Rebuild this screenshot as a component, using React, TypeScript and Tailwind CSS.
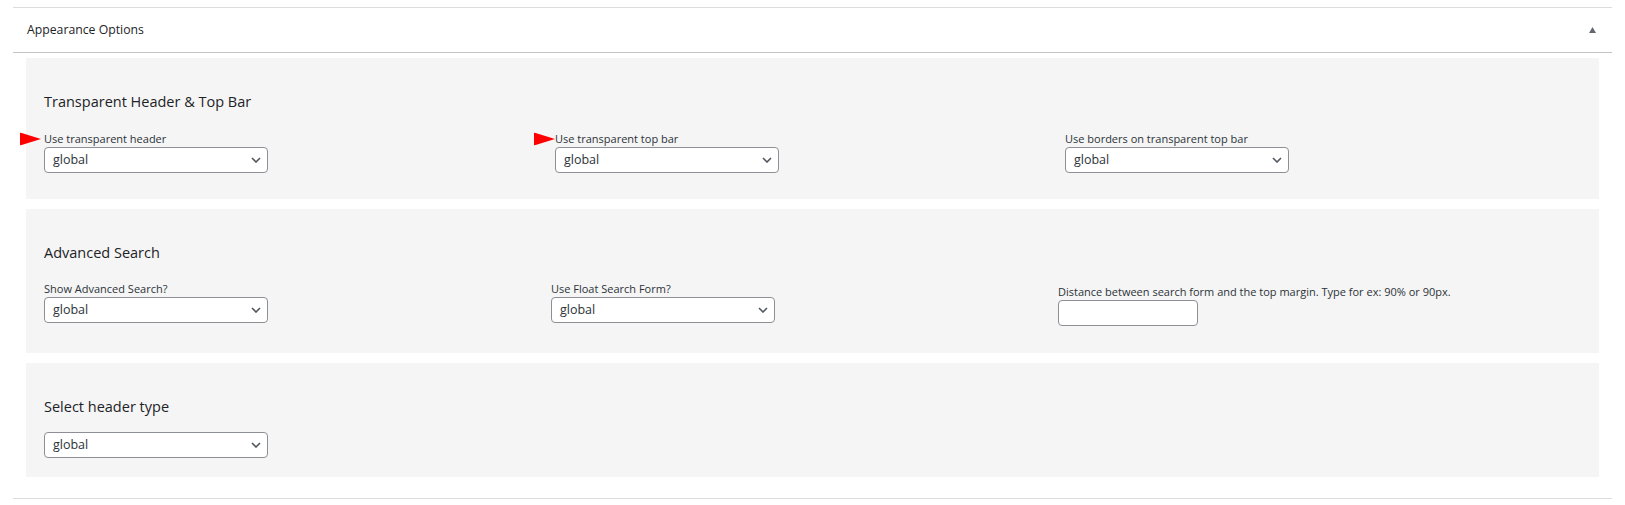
const font = { fontFamily: '"Open Sans", "Noto Sans", Arial, sans-serif' };

const Chevron = () => (
  <svg width="10" height="6" viewBox="0 0 10 6" className="text-[#50575e]">
    <path d="M1 1l4 4 4-4" fill="none" stroke="currentColor" strokeWidth="1.6" />
  </svg>
);

const Arrow = ({ offset }: { offset: string }) => (
  <svg
    width="21"
    height="13"
    viewBox="0 0 21 13"
    className={`absolute top-1/2 -translate-y-1/2 ${offset}`}
  >
    <polygon points="0,0 21,6.5 0,13" fill="#ff0000" />
  </svg>
);

const Select = () => (
  <div className="flex h-[26px] w-[224px] items-center justify-between rounded-[4px] border border-[#8c8f94] bg-white pl-[8px] pr-[6px] text-[12.5px] text-[#2c3338]">
    <span>global</span>
    <Chevron />
  </div>
);

const Field = ({
  label,
  arrow,
  children,
}: {
  label: string;
  arrow?: string;
  children: React.ReactNode;
}) => (
  <div className="flex flex-col items-start">
    <label className="relative block h-[16px] text-[11px] leading-[16px] text-[#2c3338]">
      {arrow && <Arrow offset={arrow} />}
      {label}
    </label>
    {children}
  </div>
);

const Title = ({ text }: { text: string }) => (
  <h3 className="h-[20px] text-[14.5px] font-medium leading-[20px] text-[#1d2327]">{text}</h3>
);

export default function App() {
  return (
    <div className="min-h-[505px] bg-white px-[13px] pt-[7px]" style={font}>
      <div className="border-t border-b border-[#dcdcde] pb-[21px]">
        <div className="flex h-[45px] items-center justify-between border-b border-[#c3c4c7] pl-[14px] pr-[16px]">
          <span className="text-[12.25px] text-[#1d2327]">Appearance Options</span>
          <svg width="7" height="6" viewBox="0 0 7 6">
            <polygon points="3.5,0 7,6 0,6" fill="#646970" />
          </svg>
        </div>

        <div className="flex flex-col gap-[10px] px-[13px] pt-[5px]">
          <section className="h-[141px] bg-[#f5f5f5] pl-[18px] pt-[34px]">
            <Title text="Transparent Header & Top Bar" />
            <div className="mt-[19px] grid grid-cols-[511px_510px_1fr]">
              <Field label="Use transparent header" arrow="-left-[24px]">
                <Select />
              </Field>
              <Field label="Use transparent top bar" arrow="-left-[21px]">
                <Select />
              </Field>
              <Field label="Use borders on transparent top bar">
                <Select />
              </Field>
            </div>
          </section>

          <section className="h-[144px] bg-[#f5f5f5] pl-[18px] pt-[34px]">
            <Title text="Advanced Search" />
            <div className="mt-[18px] grid grid-cols-[507px_507px_1fr]">
              <Field label="Show Advanced Search?">
                <Select />
              </Field>
              <Field label="Use Float Search Form?">
                <Select />
              </Field>
              <div className="mt-[3px]">
                <Field label="Distance between search form and the top margin. Type for ex: 90% or 90px.">
                  <div className="h-[26px] w-[140px] rounded-[4px] border border-[#8c8f94] bg-white" />
                </Field>
              </div>
            </div>
          </section>

          <section className="h-[114px] bg-[#f5f5f5] pl-[18px] pt-[34px]">
            <Title text="Select header type" />
            <div className="mt-[15px]">
              <Select />
            </div>
          </section>
        </div>
      </div>
    </div>
  );
}
